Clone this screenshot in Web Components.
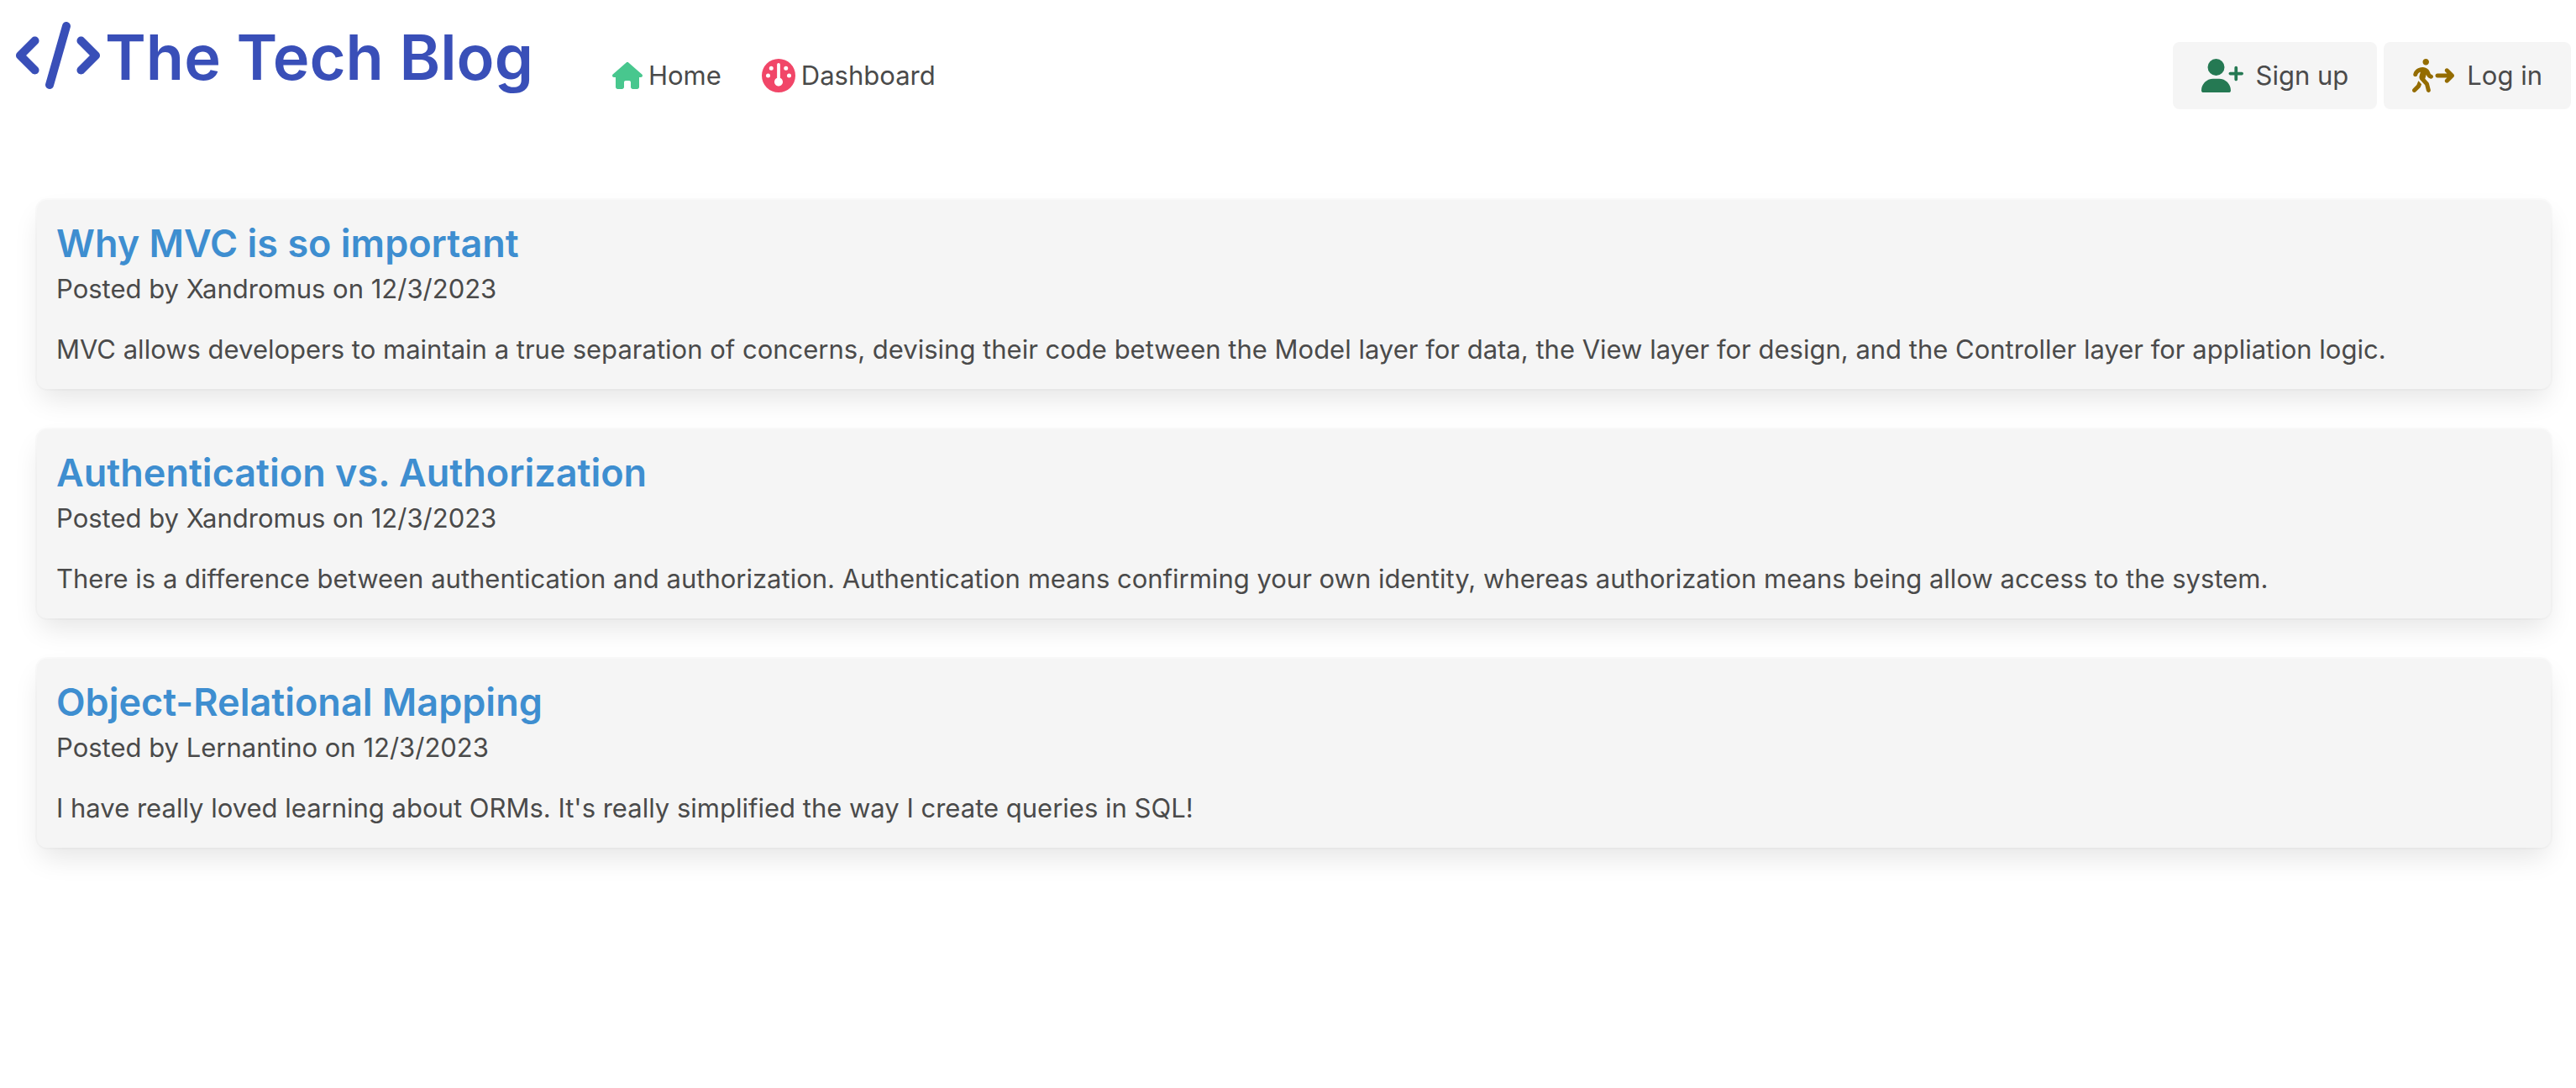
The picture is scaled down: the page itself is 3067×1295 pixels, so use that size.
<!DOCTYPE html>
<html lang="en">
<head>
<meta charset="utf-8">
<title>The Tech Blog</title>
<style>
  body {
    margin: 0;
    background: #fff;
    color: #4a4a4a;
    font-family: Inter, "Liberation Sans", sans-serif;
    font-size: 31px;
    line-height: 48px;
  }
</style>
</head>
<body>
<blog-app></blog-app>

<script>
  const ICONS = {
    code: [640, "M392.8 1.2c-17-4.9-34.7 5-39.6 22l-128 448c-4.9 17 5 34.7 22 39.6s34.7-5 39.6-22l128-448c4.9-17-5-34.7-22-39.6zm80.6 120.1c-12.5 12.5-12.5 32.8 0 45.3L562.7 256l-89.4 89.4c-12.5 12.5-12.5 32.8 0 45.3s32.8 12.5 45.3 0l112-112c12.5-12.5 12.5-32.8 0-45.3l-112-112c-12.5-12.5-32.8-12.5-45.3 0zm-306.7 0c-12.5-12.5-32.8-12.5-45.3 0l-112 112c-12.5 12.5-12.5 32.8 0 45.3l112 112c12.5 12.5 32.8 12.5 45.3 0s12.5-32.8 0-45.3L77.3 256l89.4-89.4c12.5-12.5 12.5-32.8 0-45.3z"],
    house: [576, "M575.8 255.5c0 18-15 32.1-32 32.1h-32l.7 160.2c0 2.7-.2 5.4-.5 8.1V472c0 22.1-17.9 40-40 40H456c-1.1 0-2.2 0-3.3-.1c-1.4 .1-2.8 .1-4.2 .1H416 392c-22.1 0-40-17.9-40-40V448 384c0-17.7-14.3-32-32-32H256c-17.7 0-32 14.3-32 32v64 24c0 22.1-17.9 40-40 40H160 128.1c-1.5 0-3-.1-4.5-.2c-1.2 .1-2.4 .2-3.6 .2H104c-22.1 0-40-17.9-40-40V360c0-.9 0-1.9 .1-2.8V287.6H32c-18 0-32-14-32-32.1c0-9 3-17 10-24L266.4 8c7-7 15-8 22-8s15 2 21 7L564.8 231.5c8 7 12 15 11 24z"],
    gauge: [512, "M0 256a256 256 0 1 1 512 0A256 256 0 1 1 0 256zm320 96c0-26.9-16.5-49.9-40-59.3V88c0-13.3-10.7-24-24-24s-24 10.7-24 24V292.7c-23.5 9.5-40 32.5-40 59.3c0 35.3 28.7 64 64 64s64-28.7 64-64zM144 176a32 32 0 1 0 0-64 32 32 0 1 0 0 64zm-16 80a32 32 0 1 0 -64 0 32 32 0 1 0 64 0zm288 32a32 32 0 1 0 0-64 32 32 0 1 0 0 64zM400 144a32 32 0 1 0 -64 0 32 32 0 1 0 64 0z"],
    userPlus: [640, "M96 128a128 128 0 1 1 256 0A128 128 0 1 1 96 128zM0 482.3C0 383.8 79.8 304 178.3 304h91.4C368.2 304 448 383.8 448 482.3c0 16.4-13.3 29.7-29.7 29.7H29.7C13.3 512 0 498.7 0 482.3zM504 312V248H440c-13.3 0-24-10.7-24-24s10.7-24 24-24h64V136c0-13.3 10.7-24 24-24s24 10.7 24 24v64h64c13.3 0 24 10.7 24 24s-10.7 24-24 24H552v64c0 13.3-10.7 24-24 24s-24-10.7-24-24z"],
    walking: [640, "M208 96c26.5 0 48-21.5 48-48S234.5 0 208 0s-48 21.5-48 48s21.5 48 48 48zM123.7 200.5c1-.4 1.9-.8 2.9-1.2l-16.9 63.5c-5.6 21.1-.1 43.6 14.7 59.7l70.7 77.1 22 88.1c4.3 17.1 21.7 27.6 38.8 23.3s27.6-21.7 23.3-38.8l-23-92.1c-1.9-7.8-5.8-14.9-11.2-20.8l-49.5-54 19.3-65.5 9.6 23c4.4 10.6 12.5 19.3 22.8 24.5l26.7 13.3c15.8 7.9 35 1.5 42.9-14.3s1.5-35-14.3-42.9L281 232.7l-15.3-36.8C248.5 154.8 208.3 128 163.7 128c-22.8 0-45.3 4.8-66.1 14l-8 3.5c-32.9 14.6-58.1 42.4-69.4 76.5l-2.6 7.8c-5.6 16.8 3.5 34.9 20.2 40.5s34.9-3.5 40.5-20.2l2.6-7.8c5.7-17.1 18.3-30.9 34.7-38.2l8-3.5zm-30 135.1L68.7 398 9.4 457.4c-12.5 12.5-12.5 32.8 0 45.3s32.8 12.5 45.3 0l62.3-62.3c4.6-4.6 8.2-10.1 10.6-16.1l14.5-36.2-40.7-44.4c-2.5-2.7-4.8-5.6-7-8.6zM550.6 153.4c-12.5-12.5-32.8-12.5-45.3 0s-12.5 32.8 0 45.3L530.7 224H384c-17.7 0-32 14.3-32 32s14.3 32 32 32H530.7l-25.4 25.4c-12.5 12.5-12.5 32.8 0 45.3s32.8 12.5 45.3 0l80-80c12.5-12.5 12.5-32.8 0-45.3l-80-80z"]
  };

  const define = (name, html) => customElements.define(name, class extends HTMLElement {
    constructor() {
      super();
      this.attachShadow({ mode: "open" }).innerHTML = html;
    }
  });

  // Solid icon; its height comes from --icon-size, its width from the view box.
  customElements.define("blog-icon", class extends HTMLElement {
    connectedCallback() {
      if (this.shadowRoot) return;
      const [width, path] = ICONS[this.getAttribute("name")];
      this.attachShadow({ mode: "open" }).innerHTML = `
        <style>
          :host { display: block; flex: none; }
          svg { display: block; height: var(--icon-size, 40px); fill: currentColor; }
        </style>
        <svg viewBox="0 0 ${width} 512" aria-hidden="true"><path d="${path}"/></svg>`;
    }
  });

  define("blog-brand", `
    <style>
      :host { display: block; --icon-size: 80px; }
      h1 {
        display: flex; align-items: flex-start; gap: 6px; margin: 0;
        font-size: 74px; font-weight: 600; line-height: 84px; color: #394fb8; white-space: nowrap;
      }
    </style>
    <h1><blog-icon name="code"></blog-icon><span><slot></slot></span></h1>`);

  customElements.define("nav-link", class extends HTMLElement {
    connectedCallback() {
      if (this.shadowRoot) return;
      this.attachShadow({ mode: "open" }).innerHTML = `
        <style>
          :host { display: block; }
          a { display: flex; align-items: center; gap: 7px; color: inherit; text-decoration: none; white-space: nowrap; }
          blog-icon { color: var(--accent); }
        </style>
        <a href="${this.getAttribute("href")}"><blog-icon name="${this.getAttribute("icon")}"></blog-icon><span><slot></slot></span></a>`;
    }
  });

  customElements.define("action-button", class extends HTMLElement {
    connectedCallback() {
      if (this.shadowRoot) return;
      this.attachShadow({ mode: "open" }).innerHTML = `
        <style>
          :host { display: block; }
          button {
            display: flex; align-items: center; gap: 15px; height: 80px; padding: 0 34px;
            border: 0; border-radius: 8px; background: #f5f5f5; color: inherit;
            font: inherit; white-space: nowrap; cursor: pointer;
          }
          blog-icon { color: var(--accent); }
        </style>
        <button type="button"><blog-icon name="${this.getAttribute("icon")}"></blog-icon><span><slot></slot></span></button>`;
    }
  });

  define("blog-header", `
    <style>
      :host { display: block; }
      header { display: flex; align-items: flex-start; padding: 26px 6px 0 19px; }
      nav { display: flex; align-items: center; gap: 48px; height: 80px; margin: 24px 0 0 94px; }
      .actions { display: flex; gap: 8px; margin: 24px 0 0 auto; }
      nav-link[icon=house] { --icon-size: 32px; --accent: #48c78e; }
      nav-link[icon=gauge] { --accent: #f14668; }
      action-button[icon=userPlus] { --accent: #257953; }
      action-button[icon=walking] { --accent: #946c00; }
    </style>
    <header>
      <blog-brand>The Tech Blog</blog-brand>
      <nav aria-label="Main">
        <nav-link icon="house" href="#home">Home</nav-link>
        <nav-link icon="gauge" href="#dashboard">Dashboard</nav-link>
      </nav>
      <div class="actions">
        <action-button icon="userPlus">Sign up</action-button>
        <action-button icon="walking">Log in</action-button>
      </div>
    </header>`);

  define("blog-post", `
    <style>
      :host { display: block; }
      article {
        padding: 24px 23px 23px; border-radius: 12px; background: #f5f5f5;
        box-shadow: 0 16px 32px -4px rgba(10,10,10,.1), 0 0 0 2px rgba(10,10,10,.02);
      }
      h2 { margin: 0 0 2px; font-size: 45px; font-weight: 600; line-height: 56px; }
      a { color: #3e8ed0; text-decoration: none; }
      p { margin: 0; }
      .body { margin-top: 24px; }
    </style>
    <article>
      <h2><a href="#post"><slot name="title"></slot></a></h2>
      <p><slot name="meta"></slot></p>
      <p class="body"><slot></slot></p>
    </article>`);

  define("blog-app", `
    <style>
      :host { display: block; }
      main { display: flex; flex-direction: column; gap: 48px; padding: 108px 30px 48px 44px; }
    </style>
    <blog-header></blog-header>
    <main>
      <blog-post>
        <span slot="title">Why MVC is so important</span>
        <span slot="meta">Posted by Xandromus on 12/3/2023</span>
        MVC allows developers to maintain a true separation of concerns, devising their code between the Model layer for data, the View layer for design, and the Controller layer for appliation logic.
      </blog-post>
      <blog-post>
        <span slot="title">Authentication vs. Authorization</span>
        <span slot="meta">Posted by Xandromus on 12/3/2023</span>
        There is a difference between authentication and authorization. Authentication means confirming your own identity, whereas authorization means being allow access to the system.
      </blog-post>
      <blog-post>
        <span slot="title">Object-Relational Mapping</span>
        <span slot="meta">Posted by Lernantino on 12/3/2023</span>
        I have really loved learning about ORMs. It's really simplified the way I create queries in SQL!
      </blog-post>
    </main>`);
</script>
</body>
</html>
